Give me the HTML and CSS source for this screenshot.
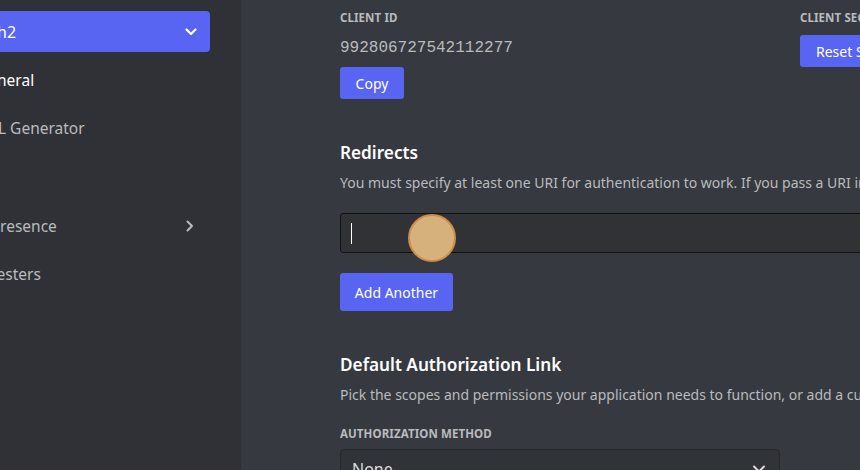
FILE: index.html
```html
<!DOCTYPE html>
<html>
<head>
<meta charset="utf-8">
<link rel="stylesheet" href="styles.css">
</head>
<body>
<div class="app">
  <aside class="sidebar">
    <div class="sidebar-inner">
      <div class="app-select">
        <span>OAuth2</span>
        <svg class="chev-down" width="14" height="14" viewBox="0 0 14 14"><path d="M2.5 4.5 L7 9 L11.5 4.5" fill="none" stroke="#fff" stroke-width="2.2" stroke-linecap="round" stroke-linejoin="round"/></svg>
      </div>
      <nav class="nav">
        <div class="nav-item sub active">General</div>
        <div class="nav-item sub">URL Generator</div>
        <div class="nav-item group">Bot</div>
        <div class="nav-item">Rich Presence
          <svg class="chev-right" width="12" height="14" viewBox="0 0 12 14"><path d="M3.5 2.5 L8 7 L3.5 11.5" fill="none" stroke="#b9bbbe" stroke-width="2" stroke-linecap="round" stroke-linejoin="round"/></svg>
        </div>
        <div class="nav-item">App Testers</div>
      </nav>
    </div>
  </aside>
  <main class="main">
    <div class="content">
      <div class="client-row">
        <div class="client-col">
          <div class="label">Client ID</div>
          <div class="client-id">992806727542112277</div>
          <button class="btn btn-copy">Copy</button>
        </div>
        <div class="client-col">
          <div class="label">Client Secret</div>
          <button class="btn btn-reset">Reset Secret</button>
        </div>
      </div>

      <section class="section redirects">
        <h2 class="heading">Redirects</h2>
        <p class="desc">You must specify at least one URI for authentication to work. If you pass a URI in an OAuth request, it must exactly match one of the URIs you enter here.</p>
        <div class="input-wrap">
          <div class="input"><span class="caret"></span></div>
          <span class="click-dot"></span>
        </div>
        <button class="btn btn-add">Add Another</button>
      </section>

      <section class="section auth">
        <h2 class="heading">Default Authorization Link</h2>
        <p class="desc desc-auth">Pick the scopes and permissions your application needs to function, or add a custom URL.</p>
        <div class="label label-method">Authorization Method</div>
        <div class="select">
          <span>None</span>
          <svg width="16" height="16" viewBox="0 0 16 16"><path d="M3 5.5 L8 10.5 L13 5.5" fill="none" stroke="#dcddde" stroke-width="2" stroke-linecap="round" stroke-linejoin="round"/></svg>
        </div>
      </section>
    </div>
  </main>
</div>
</body>
</html>
```

FILE: styles.css
```css
* { box-sizing: border-box; }
html, body {
  margin: 0;
  width: 860px;
  height: 470px;
  overflow: hidden;
  background: #36393f;
  font-family: "Noto Sans", "Open Sans", sans-serif;
}
.app {
  display: flex;
  height: 470px;
}
.sidebar {
  width: 241px;
  flex-shrink: 0;
  background: #2f3136;
  overflow: hidden;
}
.sidebar-inner {
  margin-left: -57px;
  width: 298px;
  padding: 11px 31px 0 0;
}
.app-select {
  height: 41px;
  background: #5865f2;
  border-radius: 4px;
  display: flex;
  align-items: center;
  justify-content: space-between;
  padding: 0 12px 0 16px;
  color: #fff;
  font-size: 16px;
  font-weight: 400;
}
.chev-down { display: block; }
.nav {
  display: flex;
  flex-direction: column;
  gap: 8px;
  margin-top: 8px;
}
.nav-item {
  height: 40px;
  display: flex;
  align-items: center;
  justify-content: space-between;
  padding: 0 14px 0 13px;
  color: #b9bbbe;
  font-size: 15.5px;
  white-space: nowrap;
}
.nav-item.sub { padding-left: 34px; }
.nav-item.active { color: #fff; }
.nav-item.group { margin-top: 2px; }
.chev-right { display: block; }

.main {
  flex: 1;
  overflow: hidden;
  position: relative;
}
.content {
  width: 1100px;
  padding: 10px 0 0 99px;
}
.client-row {
  display: flex;
}
.client-col {
  width: 460px;
  display: flex;
  flex-direction: column;
  align-items: flex-start;
}
.label {
  font-size: 11.5px;
  line-height: 16px;
  font-weight: 700;
  text-transform: uppercase;
  color: #b9bbbe;
  letter-spacing: 0.1px;
}
.client-id {
  font-family: "Liberation Mono", "DejaVu Sans Mono", monospace;
  font-size: 16px;
  line-height: 24px;
  color: #b9bbbe;
  margin-top: 10px;
}
.btn {
  font-family: "Noto Sans", "Open Sans", sans-serif;
  background: #5865f2;
  color: #fff;
  border: 0;
  border-radius: 3px;
  font-size: 14px;
  font-weight: 400;
  padding: 0 16px;
  height: 32px;
}
.btn-copy { margin-top: 7px; width: 64px; padding: 0; }
.btn-reset { margin-top: 9px; }

.section { display: flex; flex-direction: column; align-items: flex-start; }
.redirects { margin-top: 42px; }
.heading {
  margin: 0;
  font-size: 17.2px;
  line-height: 24px;
  font-weight: 600;
  color: #fff;
}
.desc {
  margin: 8px 0 0;
  font-size: 14px;
  line-height: 20px;
  color: #b9bbbe;
  white-space: nowrap;
}
.input-wrap {
  position: relative;
  width: 100%;
  margin-top: 20px;
}
.input {
  height: 40px;
  width: 100%;
  background: #303236;
  border: 1px solid #111214;
  border-radius: 3px;
  display: flex;
  align-items: center;
  padding-left: 10px;
}
.caret {
  width: 1px;
  height: 21px;
  background: #fff;
}
.click-dot {
  position: absolute;
  left: 68px;
  top: 1px;
  width: 48px;
  height: 48px;
  border-radius: 50%;
  background: #d7b17b;
  border: 2px solid #c98d4c;
}
.btn-add {
  margin-top: 20px;
  height: 38px;
  width: 113px;
  padding: 0;
}
.auth { margin-top: 42px; }
.desc-auth { margin-top: 8px; }
.label-method { margin-top: 21px; }
.select {
  margin-top: 7px;
  width: 440px;
  height: 40px;
  background: #303338;
  border: 1px solid #26282c;
  border-radius: 4px;
  display: flex;
  align-items: center;
  justify-content: space-between;
  padding: 0 12px 0 11px;
  color: #dcddde;
  font-size: 16px;
}
.select svg { display: block; }
```
